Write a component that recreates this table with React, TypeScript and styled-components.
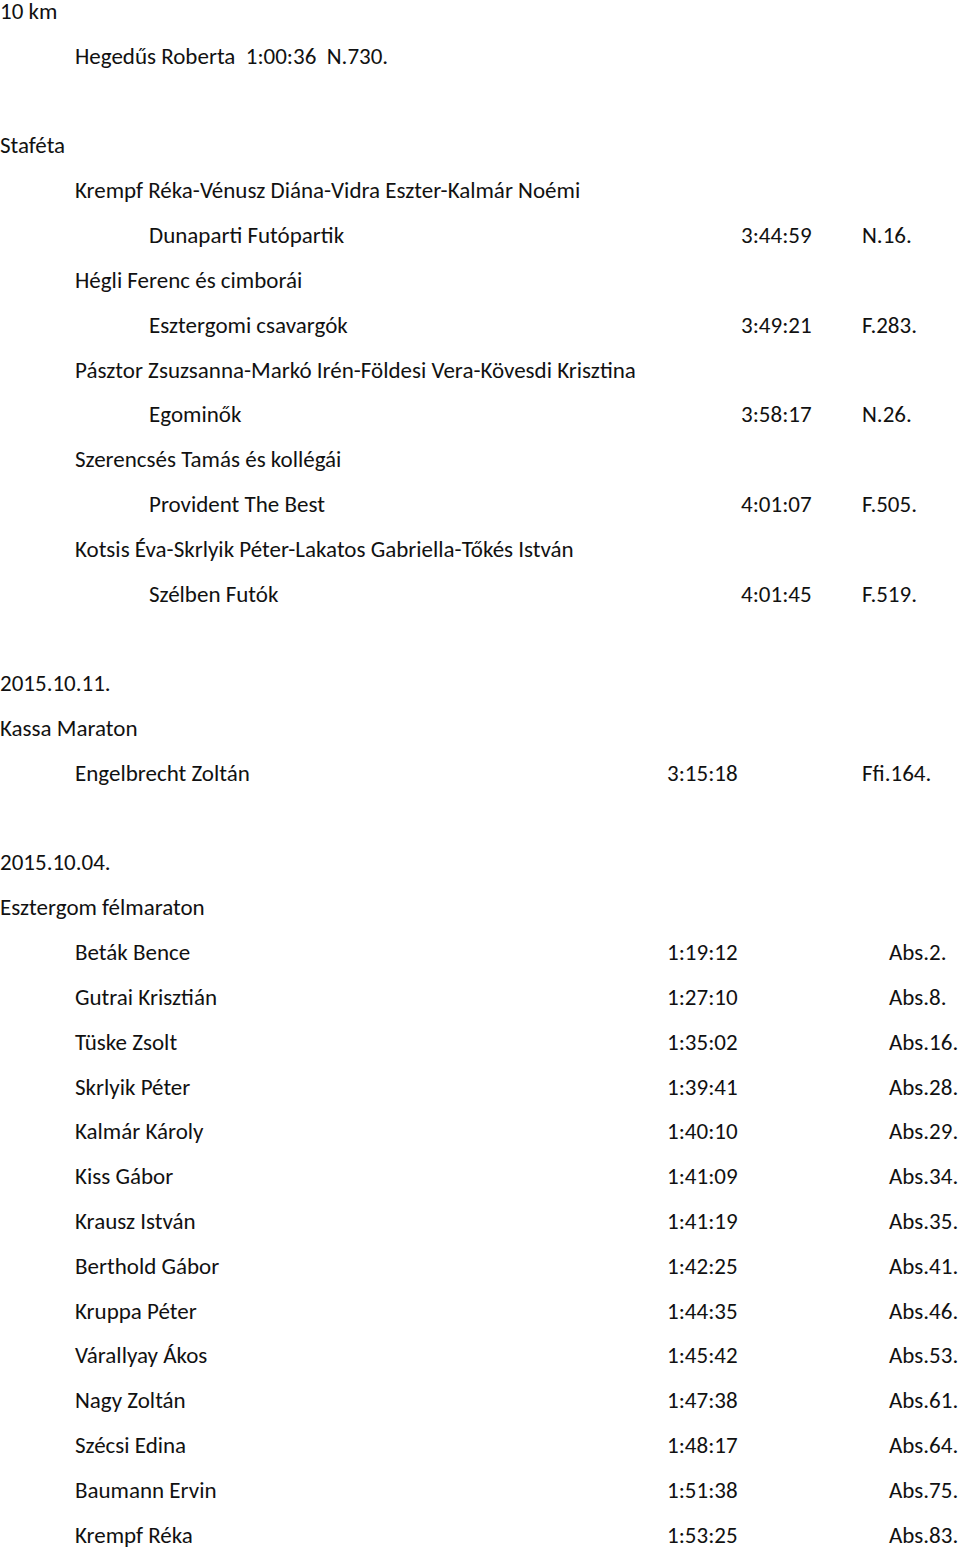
import * as React from 'react';
import styled, { createGlobalStyle } from 'styled-components';

const GlobalStyle = createGlobalStyle`
  body {
    margin: 0;
    background: #ffffff;
    color: #111111;
    font-family: Carlito, Calibri, Lato, 'Liberation Sans', sans-serif;
    font-size: 23px;
  }
`;

/**
 * Page holding every line of the results list.
 */
const Page = styled.div`
  width: 960px;
  margin-top: -11px;
  display: flex;
  flex-direction: column;
`;

/**
 * One line of text, indented by level.
 */
const Line = styled.div<{ indent?: number }>`
  height: 44.82px;
  line-height: 44.82px;
  padding-left: ${p => p.indent ?? 0}px;
  white-space: pre;
`;

/**
 * Result line with fixed time and category columns.
 */
const ResultRow = styled.div<{ indent: number; timeX: number; catX: number }>`
  height: 44.82px;
  line-height: 44.82px;
  display: grid;
  grid-template-columns: ${p => p.indent}px ${p => p.timeX - p.indent}px ${p => p.catX - p.timeX}px auto;
  white-space: pre;
`;

const Blank = styled.div`
  height: 44.82px;
`;

interface Result {
  name: string;
  time: string;
  cat: string;
}

interface Relay {
  members: string;
  team: string;
  time: string;
  cat: string;
}

const relays: Relay[] = [
  { members: 'Krempf Réka-Vénusz Diána-Vidra Eszter-Kalmár Noémi', team: 'Dunaparti Futópartik', time: '3:44:59', cat: 'N.16.' },
  { members: 'Hégli Ferenc és cimborái', team: 'Esztergomi csavargók', time: '3:49:21', cat: 'F.283.' },
  { members: 'Pásztor Zsuzsanna-Markó Irén-Földesi Vera-Kövesdi Krisztina', team: 'Egominők', time: '3:58:17', cat: 'N.26.' },
  { members: 'Szerencsés Tamás és kollégái', team: 'Provident The Best', time: '4:01:07', cat: 'F.505.' },
  { members: 'Kotsis Éva-Skrlyik Péter-Lakatos Gabriella-Tőkés István', team: 'Szélben Futók', time: '4:01:45', cat: 'F.519.' },
];

const halfMarathon: Result[] = [
  { name: 'Beták Bence', time: '1:19:12', cat: 'Abs.2.' },
  { name: 'Gutrai Krisztián', time: '1:27:10', cat: 'Abs.8.' },
  { name: 'Tüske Zsolt', time: '1:35:02', cat: 'Abs.16.' },
  { name: 'Skrlyik Péter', time: '1:39:41', cat: 'Abs.28.' },
  { name: 'Kalmár Károly', time: '1:40:10', cat: 'Abs.29.' },
  { name: 'Kiss Gábor', time: '1:41:09', cat: 'Abs.34.' },
  { name: 'Krausz István', time: '1:41:19', cat: 'Abs.35.' },
  { name: 'Berthold Gábor', time: '1:42:25', cat: 'Abs.41.' },
  { name: 'Kruppa Péter', time: '1:44:35', cat: 'Abs.46.' },
  { name: 'Várallyay Ákos', time: '1:45:42', cat: 'Abs.53.' },
  { name: 'Nagy Zoltán', time: '1:47:38', cat: 'Abs.61.' },
  { name: 'Szécsi Edina', time: '1:48:17', cat: 'Abs.64.' },
  { name: 'Baumann Ervin', time: '1:51:38', cat: 'Abs.75.' },
  { name: 'Krempf Réka', time: '1:53:25', cat: 'Abs.83.' },
];

const Row: React.FC<{ indent: number; timeX: number; catX: number; r: Result }> = ({ indent, timeX, catX, r }) => (
  <ResultRow indent={indent} timeX={timeX} catX={catX}>
    <span />
    <span>{r.name}</span>
    <span>{r.time}</span>
    <span>{r.cat}</span>
  </ResultRow>
);

const App: React.FC = () => (
  <>
    <GlobalStyle />
    <Page>
      <Line>10 km</Line>
      <Line indent={75}>{'Hegedűs Roberta  1:00:36  N.730.'}</Line>
      <Blank />
      <Line>Staféta</Line>
      {relays.map(r => (
        <React.Fragment key={r.team}>
          <Line indent={75}>{r.members}</Line>
          <Row indent={149} timeX={741} catX={862} r={{ name: r.team, time: r.time, cat: r.cat }} />
        </React.Fragment>
      ))}
      <Blank />
      <Line>2015.10.11.</Line>
      <Line>Kassa Maraton</Line>
      <Row indent={75} timeX={667} catX={862} r={{ name: 'Engelbrecht Zoltán', time: '3:15:18', cat: 'Ffi.164.' }} />
      <Blank />
      <Line>2015.10.04.</Line>
      <Line>Esztergom félmaraton</Line>
      {halfMarathon.map(r => (
        <Row key={r.name} indent={75} timeX={667} catX={889} r={r} />
      ))}
    </Page>
  </>
);

export default App;
